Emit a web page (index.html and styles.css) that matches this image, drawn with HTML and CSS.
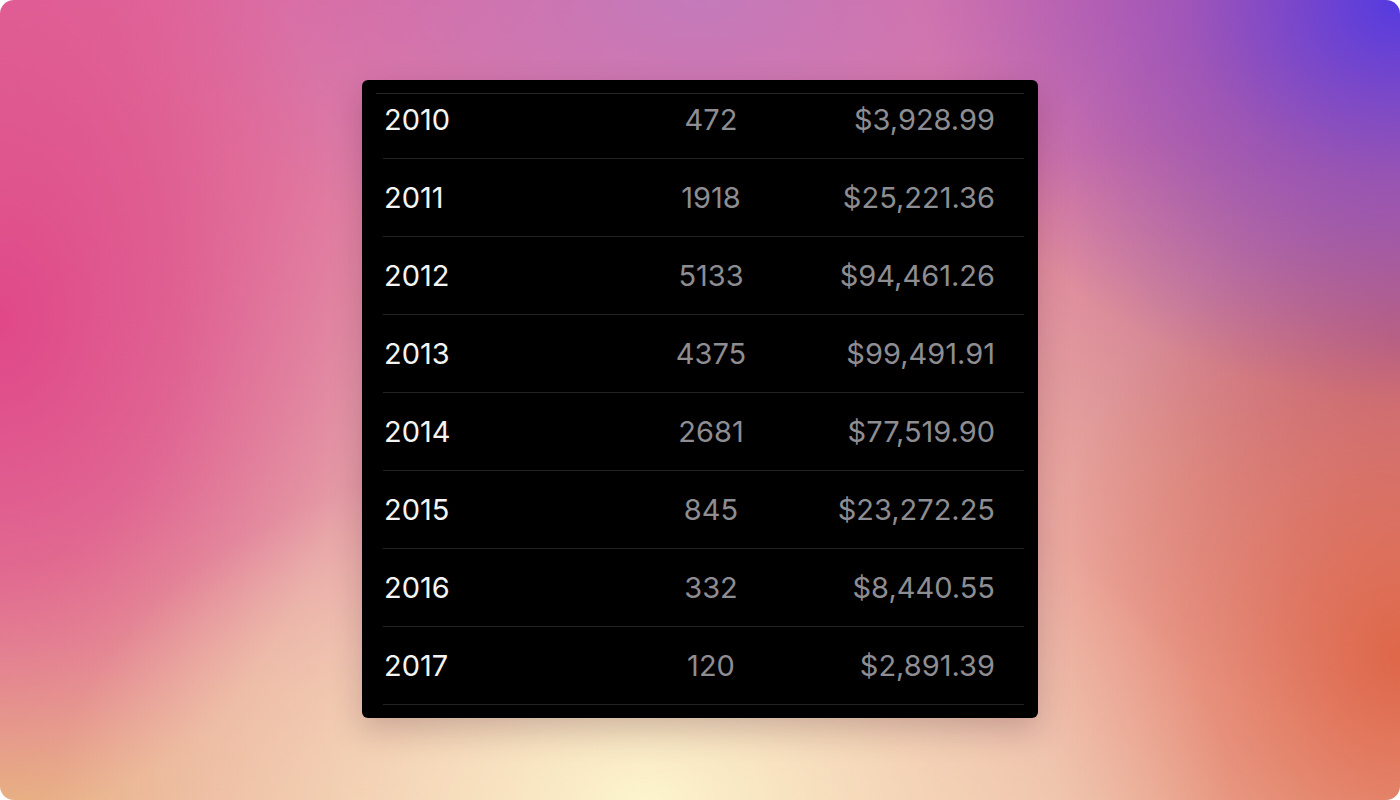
FILE: index.html
```html
<!DOCTYPE html>
<html lang="en">
<head>
<meta charset="utf-8">
<title>Sales by year</title>
<link rel="stylesheet" href="styles.css">
</head>
<body>
<div class="stage">
  <div class="card">
    <div class="header-rule"></div>
    <div class="rows">
      <div class="row"><span class="year">2010</span><span class="count">472</span><span class="amount">$3,928.99</span></div>
      <div class="row"><span class="year">2011</span><span class="count">1918</span><span class="amount">$25,221.36</span></div>
      <div class="row"><span class="year">2012</span><span class="count">5133</span><span class="amount">$94,461.26</span></div>
      <div class="row"><span class="year">2013</span><span class="count">4375</span><span class="amount">$99,491.91</span></div>
      <div class="row"><span class="year">2014</span><span class="count">2681</span><span class="amount">$77,519.90</span></div>
      <div class="row"><span class="year">2015</span><span class="count">845</span><span class="amount">$23,272.25</span></div>
      <div class="row"><span class="year">2016</span><span class="count">332</span><span class="amount">$8,440.55</span></div>
      <div class="row"><span class="year">2017</span><span class="count">120</span><span class="amount">$2,891.39</span></div>
    </div>
  </div>
</div>
</body>
</html>
```

FILE: styles.css
```css
html, body {
  margin: 0;
  padding: 0;
  background: #ffffff;
}

.stage {
  width: 1400px;
  height: 800px;
  border-radius: 14px;
  overflow: hidden;
  display: flex;
  justify-content: center;
  align-items: flex-start;
  box-sizing: border-box;
  padding-top: 80px;
  background:
    radial-gradient(ellipse 34% 50% at 100% 0%, rgba(84, 58, 224, 1) 0%, rgba(120, 70, 200, 0.6) 45%, rgba(140, 80, 200, 0) 100%),
    radial-gradient(ellipse 42% 45% at 46% 100%, rgba(252, 244, 204, 1) 0%, rgba(248, 226, 190, 0.7) 45%, rgba(240, 200, 170, 0) 100%),
    radial-gradient(ellipse 26% 55% at 100% 82%, rgba(222, 100, 68, 0.95) 0%, rgba(226, 110, 80, 0.5) 50%, rgba(226, 120, 90, 0) 100%),
    radial-gradient(ellipse 28% 50% at 100% 42%, rgba(176, 88, 128, 0.85) 0%, rgba(176, 88, 128, 0) 100%),
    radial-gradient(ellipse 26% 62% at 0% 40%, rgba(224, 72, 136, 1) 0%, rgba(222, 80, 138, 0.7) 50%, rgba(222, 100, 140, 0) 100%),
    radial-gradient(ellipse 30% 40% at 0% 100%, rgba(232, 180, 130, 1) 0%, rgba(232, 170, 140, 0.5) 50%, rgba(232, 170, 140, 0) 100%),
    radial-gradient(ellipse 28% 40% at 84% 58%, rgba(238, 176, 156, 0.9) 0%, rgba(238, 176, 156, 0) 100%),
    radial-gradient(ellipse 40% 35% at 50% 0%, rgba(196, 122, 186, 1) 0%, rgba(205, 120, 180, 0) 100%),
    linear-gradient(180deg, #e06a9e 0%, #e290a6 45%, #ebb4a4 100%);
}

.card {
  position: relative;
  width: 676px;
  height: 638px;
  box-sizing: border-box;
  padding: 1px 14px 13px 21px;
  background: #000000;
  border-radius: 6px;
  box-shadow: 0 12px 32px rgba(60, 20, 40, 0.22);
  overflow: hidden;
  font-family: Inter, "Liberation Sans", sans-serif;
  font-size: 29px;
}

.header-rule {
  position: absolute;
  top: 13px;
  left: 14px;
  right: 14px;
  height: 1px;
  background: #262626;
}

.rows {
  display: flex;
  flex-direction: column;
}

.row {
  display: grid;
  grid-template-columns: 264px 128px 1fr;
  align-items: center;
  height: 78px;
  box-sizing: border-box;
  border-bottom: 1px solid #222222;
  padding-right: 29px;
}

.year {
  color: #f4f4f4;
  padding-left: 1px;
}

.count {
  color: #8d8d92;
  text-align: center;
}

.amount {
  color: #8d8d92;
  text-align: right;
}
```
